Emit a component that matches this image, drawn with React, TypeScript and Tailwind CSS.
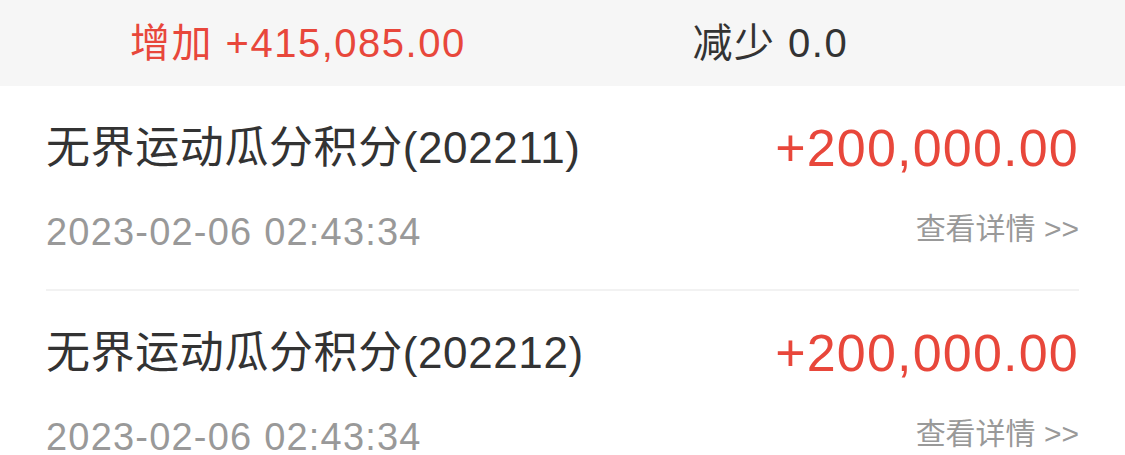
import React from 'react';

const FONT = { fontFamily: '"Liberation Sans", "Noto Sans CJK SC", sans-serif' };

const records = [
  { title: '无界运动瓜分积分(202211)', amount: '+200,000.00', time: '2023-02-06 02:43:34' },
  { title: '无界运动瓜分积分(202212)', amount: '+200,000.00', time: '2023-02-06 02:43:34' },
];

const App: React.FC = () => {
  return (
    <div className="w-[1125px] h-[455px] overflow-hidden bg-white" style={FONT}>
      <div className="flex h-[86px] items-center bg-[#f6f6f6]">
        <div className="flex-1 pl-[130px] text-[40px] tracking-[1.5px] text-[#e8473b]">增加 +415,085.00</div>
        <div className="flex-1 pl-[130px] text-[40px] tracking-[1.5px] text-[#333333]">减少 0.0</div>
      </div>
      <div className="px-[46px]">
        {records.map((r, i) => (
          <div key={i} className="border-b-2 border-[#f2f2f2] h-[205px] pt-[20px]">
            <div className="flex items-center justify-between h-[84px]">
              <span className="text-[44px] tracking-[0.6px] text-[#333333]">{r.title}</span>
              <span className="text-[52px] tracking-[1.2px] text-[#e8473b]">{r.amount}</span>
            </div>
            <div className="flex items-center justify-between h-[84px]">
              <span className="text-[38px] tracking-[1.2px] text-[#999999]">{r.time}</span>
              <span className="mb-[8px] text-[30px] text-[#999999]">查看详情 &gt;&gt;</span>
            </div>
          </div>
        ))}
      </div>
    </div>
  );
};

export default App;
